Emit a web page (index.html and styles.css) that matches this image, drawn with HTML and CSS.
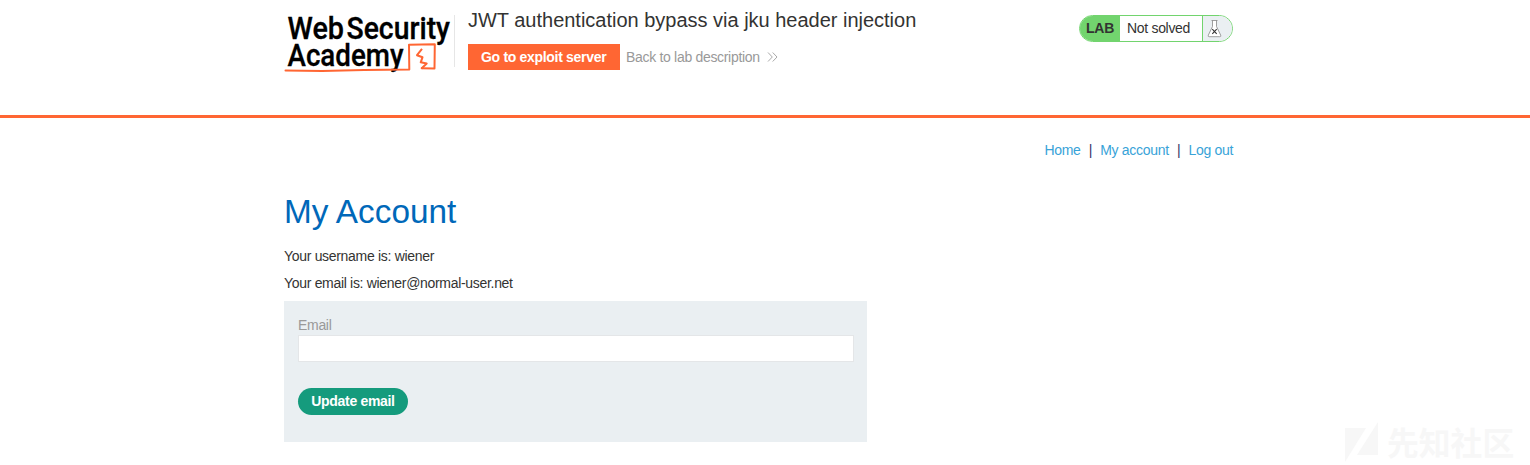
FILE: index.html
```html
<!DOCTYPE html>
<html lang="en">
<head>
<meta charset="utf-8">
<title>JWT authentication bypass via jku header injection</title>
<link rel="stylesheet" href="styles.css">
</head>
<body>
<header class="lab-header">
  <div class="container header-row">
    <svg class="logo" width="170" height="66" viewBox="0 0 170 66" role="img" aria-label="Web Security Academy">
      <g class="logo-text">
        <text x="3.5" y="30.7" textLength="56.5" lengthAdjust="spacingAndGlyphs">Web</text>
        <text x="62.5" y="30.7" textLength="103.5" lengthAdjust="spacingAndGlyphs">Security</text>
        <text x="3.5" y="58" textLength="116" lengthAdjust="spacingAndGlyphs">Academy</text>
      </g>
      <path class="logo-line" d="M1.5 62.5 L38 62.9 L80 61.9 L125.3 61.5 L125 36.7 L150.8 36.2 L150.5 60.5 L137.7 60.3"/>
      <path class="logo-bolt" d="M138 40.8 L133 47.2 L138.5 49.3 L136.7 54.3 L142.7 55.5 L137.5 60.5"/>
    </svg>
    <section class="lab-title">
      <h2>JWT authentication bypass via jku header injection</h2>
      <div class="lab-links">
        <a class="exploit-button">Go to exploit server</a>
        <a class="back-link">Back to lab description</a>
        <svg class="chevrons" width="12" height="12" viewBox="0 0 12 12"><path d="M1 1.5 L5.3 6 L1 10.5 M5.7 1.5 L10 6 L5.7 10.5"/></svg>
      </div>
    </section>
    <div class="lab-status">
      <span class="status-tag">LAB</span>
      <span class="status-text">Not solved</span>
      <span class="status-icon">
        <svg width="16" height="20" viewBox="0 0 16 20"><path class="flask" d="M4.5 1.5 H10.5 M5.5 1.5 V7.5 L1.3 16.2 Q.8 17.7 2.2 17.7 H12.8 Q14.2 17.7 13.7 16.2 L9.5 7.5 V1.5"/><path class="cross" d="M5.3 10.2 L9.7 14.8 M9.7 10.2 L5.3 14.8"/></svg>
      </span>
    </div>
  </div>
</header>
<main class="container">
  <nav class="top-links"><a>Home</a><span>|</span><a>My account</a><span>|</span><a>Log out</a></nav>
  <h1>My Account</h1>
  <p>Your username is: wiener</p>
  <p>Your email is: wiener@normal-user.net</p>
  <form class="email-form">
    <label for="email">Email</label>
    <input id="email" type="email">
    <button type="button">Update email</button>
  </form>
</main>
<div class="watermark">
  <svg width="34" height="42" viewBox="0 0 34 42"><path d="M0 7 H21 L0 41 Z M33 1 V34 H12 Z"/></svg>
  <span>先知社区</span>
</div>
</body>
</html>
```
FILE: styles.css
```css
* { box-sizing: border-box; }
body {
  margin: 0;
  height: 465px;
  overflow: hidden;
  background: #fff;
  color: #333332;
  font: 14px/18px "Liberation Sans", Arial, sans-serif;
  letter-spacing: -.31px;
}
.container { width: 949px; margin-left: 284px; }
.lab-header { height: 118px; border-bottom: 3px solid #ff6633; }
.header-row { display: flex; padding-top: 8px; }
.logo { flex: none; overflow: visible; letter-spacing: 0; }
.logo-text { font: 500 30.5px Roboto, "Noto Sans", sans-serif; fill: #000; stroke: #000; stroke-width: .3; }
.logo-line { fill: none; stroke: #ff6633; stroke-width: 2; stroke-linejoin: round; stroke-linecap: round; }
.logo-bolt { fill: none; stroke: #ff6633; stroke-width: 2; stroke-linejoin: round; }
.lab-title { height: 52px; margin-top: 7px; padding-left: 13px; border-left: 1px solid #e6e6e6; }
.lab-title h2 { margin: -7px 0 0; font-size: 20px; line-height: 24px; font-weight: 400; letter-spacing: -.01px; white-space: nowrap; }
.lab-links { display: flex; align-items: center; margin-top: 12px; }
.exploit-button { width: 152px; height: 26px; padding: 0 13px; line-height: 26px; background: #ff6633; color: #fff; font-weight: 700; white-space: nowrap; }
.back-link { margin-left: 6px; color: #999; }
.chevrons { margin-left: 7px; fill: none; stroke: #aaa; stroke-width: 1; }
.lab-status {
  display: flex;
  height: 27px;
  width: 154px;
  margin: 7px 0 0 auto;
  border: 1px solid #72d46e;
  border-radius: 14px;
  overflow: hidden;
  line-height: 25px;
}
.status-tag { width: 40px; padding-left: 6px; background: #72d46e; font-weight: 700; letter-spacing: -.2px; }
.status-text { flex: 1; padding-left: 7px; }
.status-icon { display: flex; align-items: center; width: 30px; padding-left: 4px; background: #eaeff2; border-left: 1px solid #72d46e; }
.flask { fill: #fff; stroke: #888; stroke-width: .8; }
.cross { fill: none; stroke: #333; stroke-width: 1.1; }
.top-links { display: flex; justify-content: flex-end; gap: 8.2px; padding-top: 23px; color: #333366; }
.top-links a { color: #38a3d8; }
h1 { margin: 33px 0 0; font-size: 33.33px; line-height: 40px; font-weight: 400; letter-spacing: 0; color: #0068b9; }
p { margin: 0 0 8.5px; }
h1 + p { margin-top: 15px; }
.email-form { width: 583px; height: 141px; margin-top: 9.5px; padding: 15px 13px 15px 14px; background: #eaeff2; }
.email-form label { display: block; color: #999; }
.email-form input { display: block; width: 100%; height: 27px; margin-top: 1px; border: 1px solid #e4e6e8; background: #fff; }
.email-form button { display: block; width: 110px; height: 27px; margin-top: 26px; padding: 0; border: 0; border-radius: 14px; background: #159b7d; color: #fff; font: 700 14px/27px "Liberation Sans", Arial, sans-serif; letter-spacing: -.31px; }
.watermark { position: absolute; left: 1345px; top: 421px; display: flex; align-items: center; gap: 8px; color: #f7f7f7; font: 700 31.8px/42px "Noto Sans CJK SC", sans-serif; letter-spacing: 0; white-space: nowrap; }
.watermark svg { fill: #f7f7f7; }
.watermark span { margin-top: -3px; }
```
